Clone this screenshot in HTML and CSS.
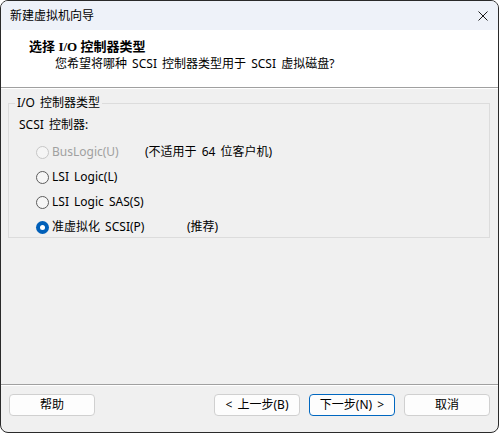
FILE: index.html
```html
<!DOCTYPE html>
<html lang="zh-CN">
<head>
<meta charset="utf-8">
<title>新建虚拟机向导</title>
<link rel="stylesheet" href="styles.css">
</head>
<body>
<div class="window">
  <div class="titlebar">
    <span class="title">新建虚拟机向导</span>
    <svg class="close" width="10" height="10" viewBox="0 0 10 10"><path d="M0.5 0.5 L9.5 9.5 M9.5 0.5 L0.5 9.5" stroke="#1a1a1a" stroke-width="1" fill="none"/></svg>
  </div>
  <div class="header">
    <div class="h-title">选择 <span class="serif">I/O</span> 控制器类型</div>
    <div class="h-sub">您希望将哪种 SCSI 控制器类型用于 SCSI 虚拟磁盘?</div>
  </div>
  <div class="content">
    <fieldset class="group">
      <legend class="legend">I/O 控制器类型</legend>
      <div class="group-inner">
        <div class="label">SCSI 控制器:</div>
        <div class="options">
          <div class="row">
            <span class="opt w-bus disabled"><span class="radio"></span>BusLogic(U)</span>
            <span class="note">(不适用于 64 位客户机)</span>
          </div>
          <div class="row">
            <span class="opt"><span class="radio"></span>LSI Logic(L)</span>
          </div>
          <div class="row">
            <span class="opt"><span class="radio"></span>LSI Logic SAS(S)</span>
          </div>
          <div class="row">
            <span class="opt w-pv"><span class="radio checked"></span>准虚拟化 SCSI(P)</span>
            <span class="note">(推荐)</span>
          </div>
        </div>
      </div>
    </fieldset>
  </div>
  <div class="footer">
    <button class="btn">帮助</button>
    <div class="spacer"></div>
    <button class="btn">&lt; 上一步(B)</button>
    <button class="btn default">下一步(N) &gt;</button>
    <button class="btn">取消</button>
  </div>
</div>
</body>
</html>
```

FILE: styles.css
```css
html, body {
  margin: 0;
  padding: 0;
  background: #ffffff;
}
body {
  font-family: "Noto Sans", "Noto Sans CJK SC", sans-serif;
  font-size: 12px;
  line-height: 16px;
  color: #000;
  word-spacing: 2px;
}
.window {
  width: 499px;
  height: 433px;
  box-sizing: border-box;
  border: 1px solid #2a2a2a;
  border-radius: 8px;
  overflow: hidden;
  display: flex;
  flex-direction: column;
  background: #f0f0f0;
}
.titlebar {
  height: 29px;
  flex: none;
  background: #eef2f9;
  display: flex;
  align-items: center;
  justify-content: space-between;
  padding-left: 9px;
}
.title {
  color: #000;
}
.close {
  margin-right: 10px;
  display: block;
}
.header {
  height: 57px;
  flex: none;
  background: #ffffff;
  border-bottom: 1px solid #a0a0a0;
  box-sizing: content-box;
}
.h-title {
  margin-top: 8px;
  padding-left: 28px;
  font-weight: bold;
  font-size: 13px;
  line-height: 16px;
  word-spacing: 0;
}
.serif {
  font-family: "Liberation Serif", serif;
  font-size: 13px;
  font-weight: bold;
}
.h-sub {
  margin-top: 1px;
  padding-left: 54px;
}
.content {
  flex: 1;
  border-top: 1px solid #ffffff;
  display: flex;
  flex-direction: column;
}
.group {
  margin: 6px 8px 0 7px;
  padding: 0;
  border: 1px solid #dcdcdc;
  min-width: 0;
}
.legend {
  margin-left: 6px;
  padding: 0 2px;
  line-height: 16px;
}
.group-inner {
  padding: 6px 10px 2px 10px;
}
.options {
  margin-top: 11px;
  padding-left: 17px;
  display: flex;
  flex-direction: column;
  gap: 9px;
}
.row {
  display: flex;
  align-items: center;
  height: 16px;
}
.opt {
  display: flex;
  align-items: center;
  flex: none;
}
.w-bus { width: 109px; }
.w-pv { width: 151px; }
.radio {
  width: 13px;
  height: 13px;
  box-sizing: border-box;
  border: 1px solid #5c5c5c;
  border-radius: 50%;
  background: #f6f6f6;
  margin-right: 3px;
  flex: none;
  position: relative;
}
.disabled {
  color: #a0a0a0;
}
.disabled .radio {
  border-color: #c6c6c6;
  background: #f5f5f5;
}
.radio.checked {
  border: none;
  background: #005fb8;
}
.radio.checked::after {
  content: "";
  position: absolute;
  left: 4px;
  top: 4px;
  width: 5px;
  height: 5px;
  border-radius: 50%;
  background: #ffffff;
}
.footer {
  flex: none;
  height: 30px;
  border-top: 1px solid #a0a0a0;
  box-shadow: inset 0 1px 0 #ffffff;
  padding: 9px 8px 8px 8px;
  display: flex;
  gap: 9px;
}
.spacer {
  flex: 1;
}
.btn {
  width: 86px;
  height: 22px;
  box-sizing: border-box;
  background: #fdfdfd;
  border: 1px solid #d0d0d0;
  border-radius: 4px;
  font-family: "Noto Sans", "Noto Sans CJK SC", sans-serif;
  font-size: 12px;
  line-height: 16px;
  word-spacing: 2px;
  color: #000;
  padding: 0;
}
.btn.default {
  border-color: #0067c0;
}
```
